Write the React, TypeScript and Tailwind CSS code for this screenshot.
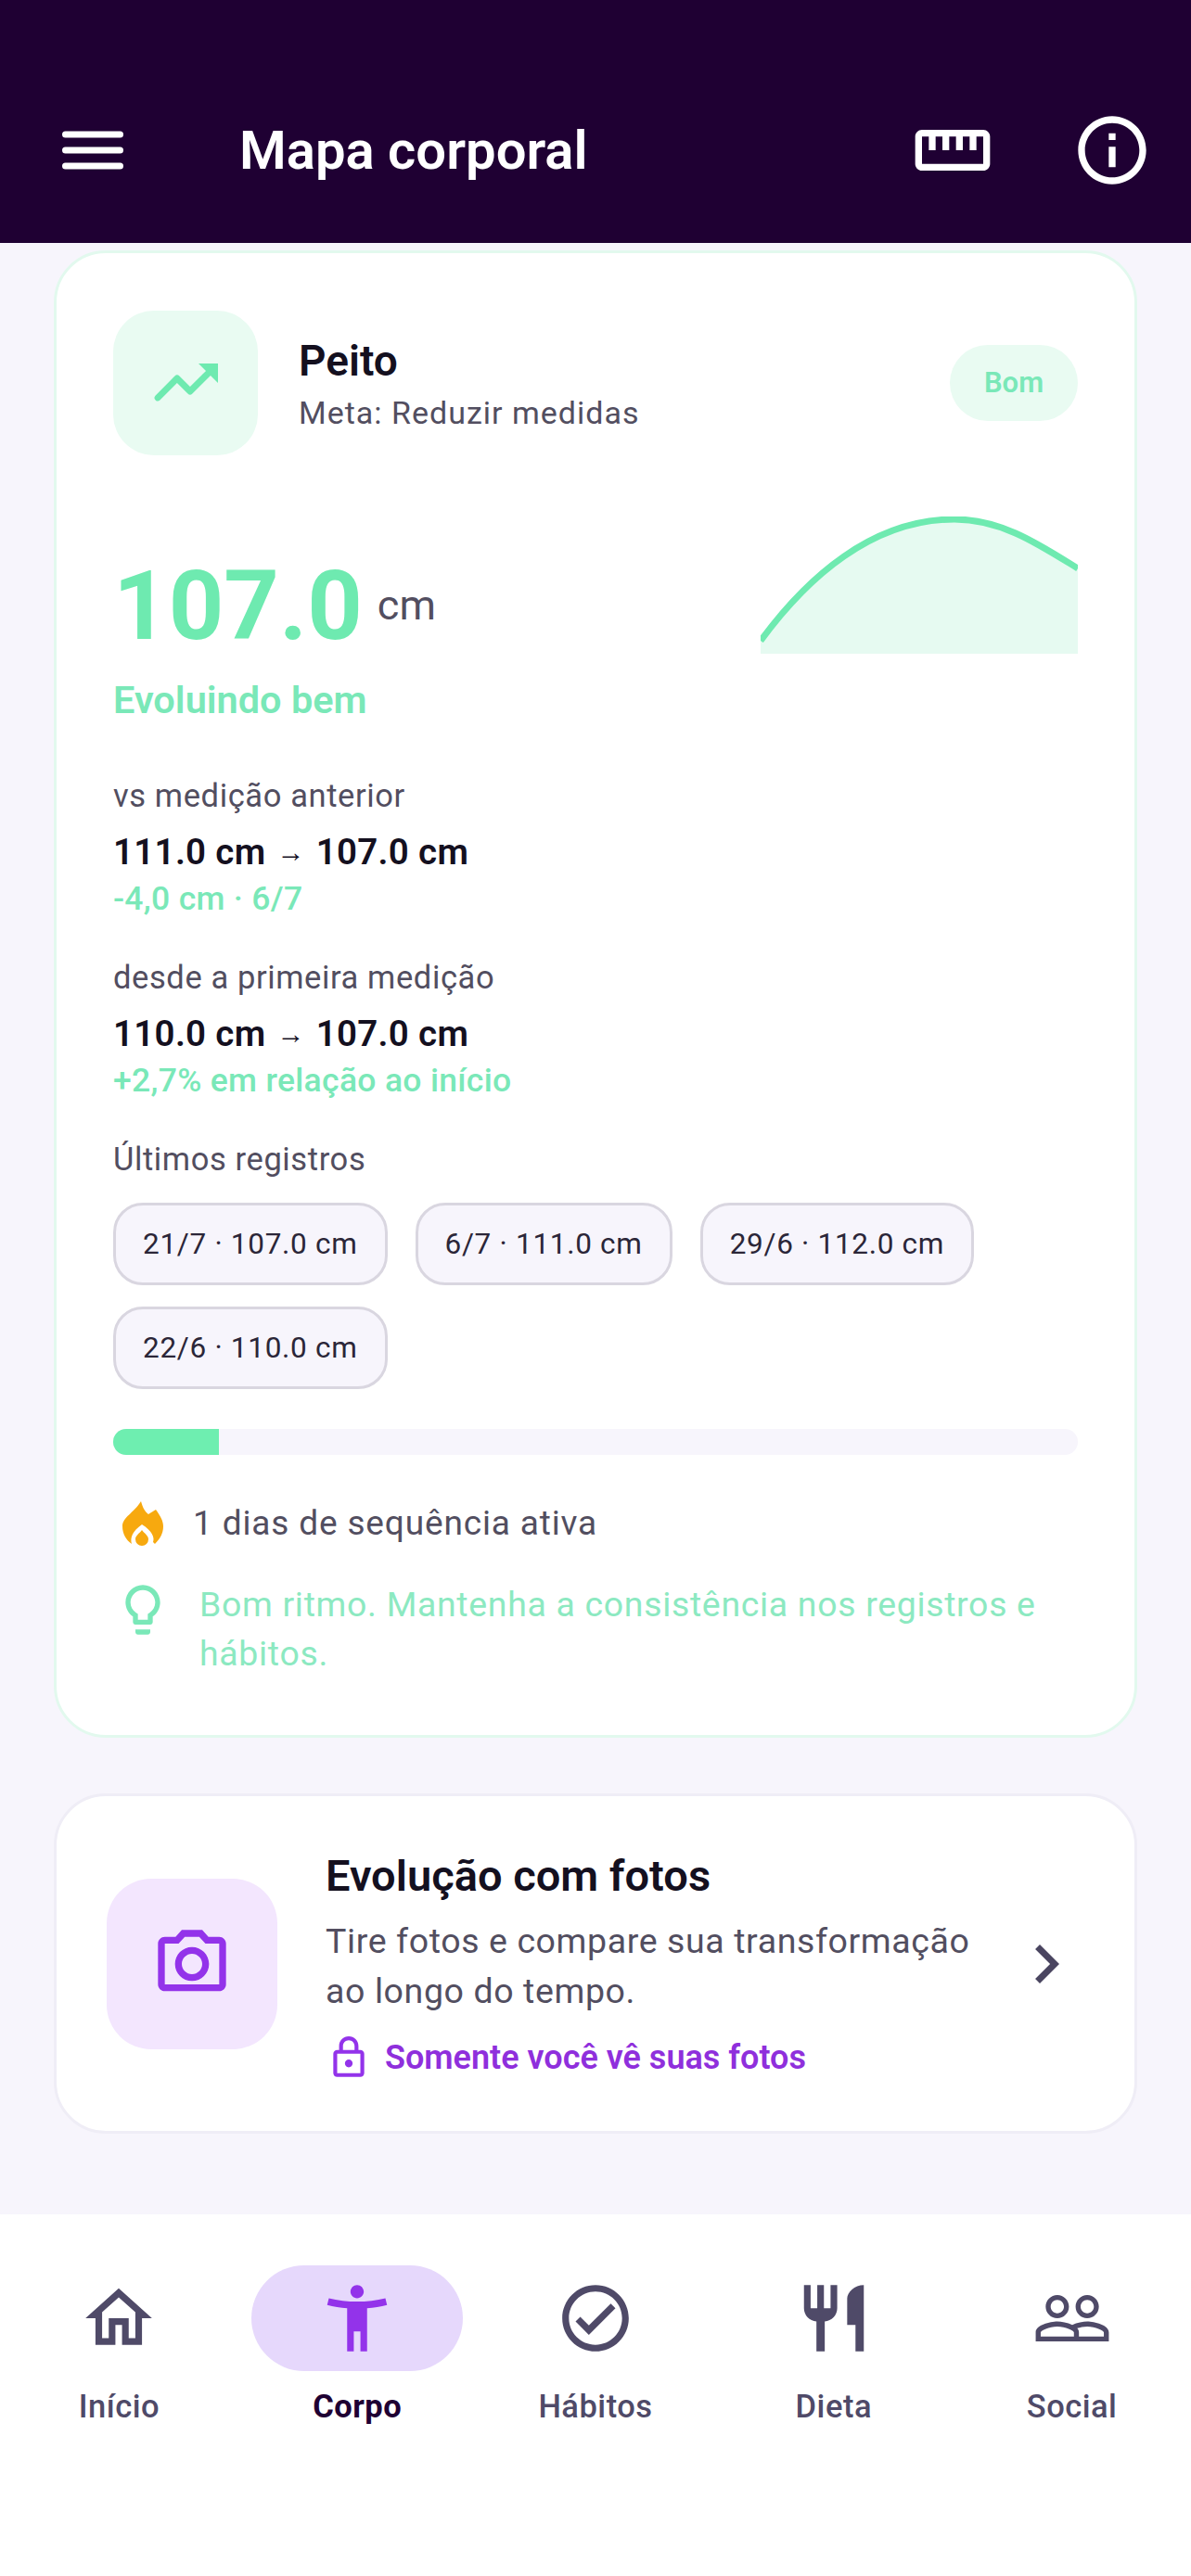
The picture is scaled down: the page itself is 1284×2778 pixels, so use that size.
import React from "react";

type IconProps = { d: string; size: number; className?: string };

// Filled 24-unit glyph used across the header, cards and navigation
function Glyph({ d, size, className }: IconProps) {
  return (
    <svg width={size} height={size} viewBox="0 0 24 24" fill="currentColor" className={`shrink-0 ${className ?? ""}`}>
      <path d={d} />
    </svg>
  );
}

const PATHS = {
  ruler: "M21 6H3c-1.1 0-2 .9-2 2v8c0 1.1.9 2 2 2h18c1.1 0 2-.9 2-2V8c0-1.1-.9-2-2-2zm0 10H3V8h2v4h2V8h2v4h2V8h2v4h2V8h2v4h2V8h2v8z",
  info: "M11 7h2v2h-2zm0 4h2v6h-2zm1-9C6.48 2 2 6.48 2 12s4.48 10 10 10 10-4.48 10-10S17.52 2 12 2zm0 18c-4.41 0-8-3.59-8-8s3.59-8 8-8 8 3.59 8 8-3.59 8-8 8z",
  trend: "M16 6l2.29 2.29-4.88 4.88-3.3-3.3a1 1 0 0 0-1.41 0L2.7 15.9a1 1 0 0 0 1.41 1.41L9.4 12l3.3 3.3a1 1 0 0 0 1.41 0l5.6-5.59L22 12V6z",
  bulb: "M9 21c0 .55.45 1 1 1h4c.55 0 1-.45 1-1v-1H9v1zm3-19C8.14 2 5 5.14 5 9c0 2.38 1.19 4.47 3 5.74V17c0 .55.45 1 1 1h6c.55 0 1-.45 1-1v-2.26c1.81-1.27 3-3.36 3-5.74 0-3.86-3.14-7-7-7zm2.85 11.1l-.85.6V16h-4v-2.3l-.85-.6C7.8 12.16 7 10.63 7 9c0-2.76 2.24-5 5-5s5 2.24 5 5c0 1.63-.8 3.16-2.15 4.1z",
  camera: "M14.12 4l1.83 2H20v12H4V6h4.05l1.83-2h4.24M15 2H9L7.17 4H4c-1.1 0-2 .9-2 2v12c0 1.1.9 2 2 2h16c1.1 0 2-.9 2-2V6c0-1.1-.9-2-2-2h-3.17L15 2zm-3 7c1.65 0 3 1.35 3 3s-1.35 3-3 3-3-1.35-3-3 1.35-3 3-3m0-2c-2.76 0-5 2.24-5 5s2.24 5 5 5 5-2.24 5-5-2.24-5-5-5z",
  lock: "M18 8h-1V6c0-2.76-2.24-5-5-5S7 3.24 7 6v2H6c-1.1 0-2 .9-2 2v10c0 1.1.9 2 2 2h12c1.1 0 2-.9 2-2V10c0-1.1-.9-2-2-2zM9 6c0-1.66 1.34-3 3-3s3 1.34 3 3v2H9V6zm9 14H6V10h12v10zm-6-3c1.1 0 2-.9 2-2s-.9-2-2-2-2 .9-2 2 .9 2 2 2z",
  chevron: "M10 6L8.59 7.41 13.17 12l-4.58 4.59L10 18l6-6z",
  home: "M12 5.69l5 4.5V18h-2v-6H9v6H7v-7.81l5-4.5M12 3L2 12h3v8h6v-6h2v6h6v-8h3L12 3z",
  body: "M20.5 6c-2.61.7-5.67 1-8.5 1s-5.89-.3-8.5-1L3 8c1.86.5 4 .83 6 1v13h2v-6h2v6h2V9c2-.17 4.14-.5 6-1l-.5-2zM12 6c1.1 0 2-.9 2-2s-.9-2-2-2-2 .9-2 2 .9 2 2 2z",
  check: "M12 2C6.48 2 2 6.48 2 12s4.48 10 10 10 10-4.48 10-10S17.52 2 12 2zm0 18c-4.41 0-8-3.59-8-8s3.59-8 8-8 8 3.59 8 8-3.59 8-8 8zm4.59-12.42L10 14.17l-2.59-2.58L6 13l4 4 8-8z",
  food: "M11 9H9V2H7v7H5V2H3v7c0 2.12 1.66 3.84 3.75 3.97V22h2.5v-9.03C11.34 12.84 13 11.12 13 9V2h-2v7zm5-3v8h2.5v8H21V2c-2.76 0-5 2.24-5 4z",
  people: "M16.5 13c-1.2 0-3.07.34-4.5 1-1.43-.67-3.3-1-4.5-1C5.33 13 1 14.08 1 16.25V19h22v-2.75c0-2.17-4.33-3.25-6.5-3.25zm-4 4.5h-10v-1.25c0-.54 2.56-1.75 5-1.75s5 1.21 5 1.75v1.25zm9 0H14v-1.25c0-.46-.2-.86-.52-1.22.88-.3 1.96-.53 3.02-.53 2.44 0 5 1.21 5 1.75v1.25zM7.5 12c1.93 0 3.5-1.57 3.5-3.5S9.43 5 7.5 5 4 6.57 4 8.5 5.57 12 7.5 12zm0-5.5c1.1 0 2 .9 2 2s-.9 2-2 2-2-.9-2-2 .9-2 2-2zm9 5.5c1.93 0 3.5-1.57 3.5-3.5S18.43 5 16.5 5 13 6.57 13 8.5s1.57 3.5 3.5 3.5zm0-5.5c1.1 0 2 .9 2 2s-.9 2-2 2-2-.9-2-2 .9-2 2-2z",
};

function Flame() {
  return (
    <svg width="44" height="50" viewBox="0 0 44 50" className="shrink-0">
      <path
        fill="#f7a90f"
        d="M20 1C22 8 24 12 28 15C31 13 34 11 36 10C41 17 44 22 44 28C44 36 40 42 35 47L33 45C35 40 32 33 21 26C11 33 8 40 10 47C4 43 0 36 0 28C0 18 12 14 20 1Z"
      />
      <path fill="#f7a90f" d="M21 32C24 36 28 38 28 42A7 7 0 0 1 14 42C14 38 18 36 21 32Z" />
    </svg>
  );
}

function Sparkline() {
  return (
    <svg width="342" height="148" viewBox="0 0 342 148" className="mb-[-2px] shrink-0">
      <path fill="#e6faf1" d="M0 134C50 66 120 3 209 3C260 3 300 30 342 56V148H0Z" />
      <path fill="none" stroke="#6eeab0" strokeWidth="7" d="M0 134C50 66 120 3 209 3C260 3 300 30 342 56" />
    </svg>
  );
}

function Comparison({ label, values, delta, first }: { label: string; values: [string, string]; delta: string; first?: boolean }) {
  return (
    <div className={first ? "mt-[55px]" : "mt-[39px]"}>
      <div className="text-[34.5px] leading-[46px] tracking-[0.6px] text-[#524e60]">{label}</div>
      <div className="mt-[15px] flex items-center text-[38.5px] leading-[46px] font-semibold tracking-[0.3px] text-[#14101f]">
        {values[0]}
        <span className="mx-[12px] text-[30px] font-normal">→</span>
        {values[1]}
      </div>
      <div className="mt-[4px] text-[35.5px] leading-[46px] font-medium tracking-[0.3px] text-[#7ae8b8]">{delta}</div>
    </div>
  );
}

const RECORDS = ["21/7 · 107.0 cm", "6/7 · 111.0 cm", "29/6 · 112.0 cm", "22/6 · 110.0 cm"];

const NAV = [
  { label: "Início", icon: PATHS.home },
  { label: "Corpo", icon: PATHS.body, active: true },
  { label: "Hábitos", icon: PATHS.check },
  { label: "Dieta", icon: PATHS.food },
  { label: "Social", icon: PATHS.people },
];

export default function App() {
  return (
    <div className="flex h-[2778px] w-full flex-col overflow-hidden bg-[#f7f5fc] font-['Roboto',sans-serif]">
      <header className="h-[262px] shrink-0 bg-[#1f0033] pt-[118px] pr-[41px] pl-[67px] text-white">
        <div className="flex h-[88px] items-center">
          <svg width="66" height="42" viewBox="0 0 66 42" className="shrink-0">
            <g stroke="#fff" strokeWidth="7" strokeLinecap="round">
              <line x1="3.5" y1="4" x2="62.5" y2="4" />
              <line x1="3.5" y1="21" x2="62.5" y2="21" />
              <line x1="3.5" y1="38" x2="62.5" y2="38" />
            </g>
          </svg>
          <h1 className="ml-[125px] text-[58px] leading-[66px] font-semibold">Mapa corporal</h1>
          <div className="ml-auto flex items-center gap-[84px]">
            <Glyph d={PATHS.ruler} size={88} />
            <Glyph d={PATHS.info} size={88} />
          </div>
        </div>
      </header>

      <main className="flex-1 overflow-hidden px-[58px] pt-[8px]">
        <section className="rounded-[56px] border-[3px] border-[#e2f9ee] bg-white px-[61px] pt-[62px] pb-[61px]">
          <div className="flex items-center">
            <div className="flex h-[156px] w-[156px] shrink-0 items-center justify-center rounded-[44px] bg-[#e9fbf2] text-[#6eeab0]">
              <Glyph d={PATHS.trend} size={84} />
            </div>
            <div className="ml-[44px] pt-[8px]">
              <div className="text-[46px] leading-[56px] font-semibold text-[#14101f]">Peito</div>
              <div className="text-[34px] leading-[56px] tracking-[1px] text-[#524e60]">Meta: Reduzir medidas</div>
            </div>
            <div className="ml-auto flex h-[82px] w-[138px] items-center justify-center rounded-[41px] bg-[#e9fbf2] text-[31px] font-semibold text-[#7ae8b8]">
              Bom
            </div>
          </div>

          <div className="mt-[66px] flex h-[146px] items-end justify-between">
            <div className="mb-[-3px] flex items-end gap-[16px]">
              <span className="text-[104px] leading-none font-bold text-[#6eeab0]">107.0</span>
              <span className="mb-[31px] text-[45px] leading-none text-[#524e60]">cm</span>
            </div>
            <Sparkline />
          </div>

          <div className="mt-[27px] text-[41.5px] leading-[50px] font-semibold text-[#7ae8b8]">Evoluindo bem</div>

          <Comparison first label="vs medição anterior" values={["111.0 cm", "107.0 cm"]} delta="-4,0 cm · 6/7" />
          <Comparison label="desde a primeira medição" values={["110.0 cm", "107.0 cm"]} delta="+2,7% em relação ao início" />

          <div className="mt-[39px] text-[34.5px] leading-[46px] tracking-[0.6px] text-[#524e60]">Últimos registros</div>
          <div className="mt-[24px] flex flex-wrap gap-x-[30px] gap-y-[23px]">
            {RECORDS.map((record) => (
              <div
                key={record}
                className="flex h-[89px] items-center rounded-[32px] border-[3px] border-[#d9d6e0] bg-[#f7f5fc] px-[29px] text-[31.5px] tracking-[0.7px] text-[#2b2638]"
              >
                {record}
              </div>
            ))}
          </div>

          <div className="mt-[43px] h-[28px] overflow-hidden rounded-[14px] bg-[#f7f5fc]">
            <div className="h-full bg-[#6eeeb0]" style={{ width: `${(114 / 1040) * 100}%` }} />
          </div>

          <div className="mt-[51px] flex h-[46px] items-center">
            <div className="flex w-[64px] shrink-0 justify-center">
              <Flame />
            </div>
            <span className="ml-[22px] text-[37px] leading-[46px] tracking-[0.85px] text-[#524e60]">1 dias de sequência ativa</span>
          </div>

          <div className="mt-[38px] flex items-start">
            <Glyph d={PATHS.bulb} size={64} className="text-[#7ae8b8]" />
            <p className="ml-[29px] text-[37.4px] leading-[53px] tracking-[0.7px] text-[#8ce9c1]">
              Bom ritmo. Mantenha a consistência nos registros e hábitos.
            </p>
          </div>
        </section>

        <section className="mt-[60px] flex h-[367px] items-center rounded-[56px] border-[3px] border-[#efedf6] bg-white pr-[53px] pl-[54px]">
          <div className="flex h-[184px] w-[184px] shrink-0 items-center justify-center rounded-[48px] bg-[#f3e6fe] text-[#9333ea]">
            <Glyph d={PATHS.camera} size={88} />
          </div>
          <div className="ml-[52px] min-w-0 flex-1 pt-[2px]">
            <div className="text-[47px] leading-[56px] font-semibold text-[#14101f]">Evolução com fotos</div>
            <p className="mt-[15px] text-[37.5px] leading-[54px] tracking-[0.6px] text-[#524e60]">
              Tire fotos e compare sua transformação ao longo do tempo.
            </p>
            <div className="mt-[22px] flex h-[46px] items-center">
              <Glyph d={PATHS.lock} size={50} className="text-[#9333ea]" />
              <span className="ml-[14px] text-[36px] leading-[46px] font-semibold text-[#8f2fdc]">Somente você vê suas fotos</span>
            </div>
          </div>
          <Glyph d={PATHS.chevron} size={84} className="text-[#4a4560]" />
        </section>
      </main>

      <nav className="grid h-[390px] shrink-0 grid-cols-5 bg-white pt-[55px]">
        {NAV.map((item) => (
          <div key={item.label} className="flex flex-col items-center">
            <div
              className={`flex h-[114px] w-[228px] items-center justify-center rounded-full ${
                item.active ? "bg-[#e6d8fc] text-[#9333ea]" : "text-[#4f4a68]"
              }`}
            >
              <Glyph d={item.icon} size={86} />
            </div>
            <span
              className={`mt-[15px] text-[34.5px] leading-[46px] tracking-[0.5px] ${
                item.active ? "font-bold text-[#1f0033]" : "font-medium text-[#4f4a68]"
              }`}
            >
              {item.label}
            </span>
          </div>
        ))}
      </nav>
    </div>
  );
}
